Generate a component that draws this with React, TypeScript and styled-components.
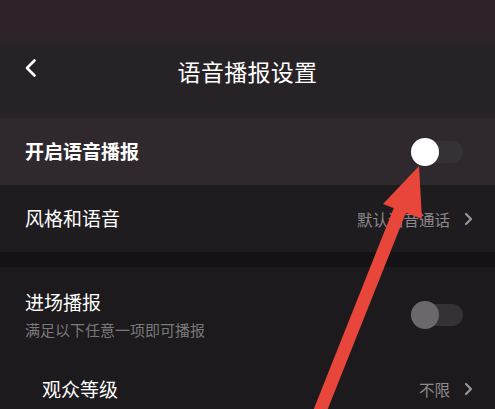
import React, { useState } from "react";
import styled, { createGlobalStyle } from "styled-components";

const GlobalStyle = createGlobalStyle`
  html, body {
    margin: 0;
    padding: 0;
    background: #1b191b;
  }
  * {
    box-sizing: border-box;
  }
  body {
    font-family: "Noto Sans CJK SC", "Noto Sans", sans-serif;
  }
`;

interface SwitchProps {
  on: boolean;
  onToggle: () => void;
}

function Switch({ on, onToggle }: SwitchProps) {
  return (
    <SwitchTrack onClick={onToggle}>
      <SwitchKnob $on={on} />
    </SwitchTrack>
  );
}

function Chevron() {
  return (
    <svg width="9" height="14" viewBox="0 0 9 14">
      <path
        d="M2 2 L7 7 L2 12"
        fill="none"
        stroke="#9a969a"
        strokeWidth="2.2"
        strokeLinecap="round"
        strokeLinejoin="round"
      />
    </svg>
  );
}

export default function App() {
  const [broadcast, setBroadcast] = useState(true);
  const [entrance, setEntrance] = useState(false);

  return (
    <Page>
      <GlobalStyle />
      <StatusArea />
      <Header>
        <BackButton>
          <svg width="14" height="20" viewBox="0 0 14 20">
            <path
              d="M10.5 2.5 L3 10 L10.5 17.5"
              fill="none"
              stroke="#ffffff"
              strokeWidth="2.6"
              strokeLinecap="round"
              strokeLinejoin="round"
            />
          </svg>
        </BackButton>
        <Title>语音播报设置</Title>
      </Header>

      <Row $bg="#2f292d">
        <RowLabel $bold>开启语音播报</RowLabel>
        <Switch on={broadcast} onToggle={() => setBroadcast(!broadcast)} />
      </Row>
      <Row $bg="#1f1c1f">
        <RowLabel>风格和语音</RowLabel>
        <RowValue>
          默认语音通话
          <Chevron />
        </RowValue>
      </Row>

      <Divider />

      <Section>
        <EntranceRow>
          <LabelStack>
            <RowLabel>进场播报</RowLabel>
            <Hint>满足以下任意一项即可播报</Hint>
          </LabelStack>
          <Switch on={entrance} onToggle={() => setEntrance(!entrance)} />
        </EntranceRow>
        <SubRow>
          <RowLabel>观众等级</RowLabel>
          <RowValue>
            不限
            <Chevron />
          </RowValue>
        </SubRow>
      </Section>

      {/* annotation arrow drawn over the screenshot */}
      <Annotation viewBox="0 0 495 409" width="495" height="409">
        <line
          x1="318"
          y1="416"
          x2="404"
          y2="200"
          stroke="#e8463a"
          strokeWidth="13"
        />
        <polygon points="419,166 383,204 422,219" fill="#e8463a" />
      </Annotation>
    </Page>
  );
}

const Page = styled.div`
  position: relative;
  width: 495px;
  height: 409px;
  overflow: hidden;
  background: #1c1a1c;
  display: flex;
  flex-direction: column;
`;

const StatusArea = styled.div`
  height: 45px;
  flex-shrink: 0;
  background: linear-gradient(180deg, #2e2329 0%, #2b2228 100%);
`;

const Header = styled.div`
  height: 73px;
  flex-shrink: 0;
  display: flex;
  align-items: center;
  justify-content: center;
  background: #272226;
  position: relative;
  padding-bottom: 22px;
`;

const BackButton = styled.div`
  position: absolute;
  left: 24px;
  top: 13px;
  display: flex;
`;

const Title = styled.div`
  color: #ffffff;
  font-size: 23px;
  letter-spacing: 0.3px;
`;

const Row = styled.div<{ $bg: string }>`
  height: 67px;
  flex-shrink: 0;
  display: flex;
  align-items: center;
  justify-content: space-between;
  padding: 0 22px 0 25px;
  background: ${(p) => p.$bg};
`;

const RowLabel = styled.div<{ $bold?: boolean }>`
  color: #ffffff;
  font-size: 19px;
  font-weight: ${(p) => (p.$bold ? 700 : 400)};
  line-height: 1.2;
`;

const RowValue = styled.div`
  display: flex;
  align-items: center;
  gap: 14px;
  color: #8d898c;
  font-size: 15.5px;
`;

const Divider = styled.div`
  height: 15px;
  flex-shrink: 0;
  background: #141214;
`;

const Section = styled.div`
  flex: 1;
  background: #1c1a1c;
  display: flex;
  flex-direction: column;
`;

const EntranceRow = styled.div`
  display: flex;
  align-items: center;
  justify-content: space-between;
  padding: 24px 22px 0 25px;
`;

const LabelStack = styled.div`
  display: flex;
  flex-direction: column;
  gap: 5px;
`;

const Hint = styled.div`
  color: #7c787b;
  font-size: 15px;
`;

const SubRow = styled.div`
  display: flex;
  align-items: center;
  justify-content: space-between;
  padding: 38px 22px 0 42px;
`;

const SwitchTrack = styled.div`
  position: relative;
  width: 52px;
  height: 22px;
  border-radius: 11px;
  background: #363135;
  cursor: pointer;
  margin-right: 10px;
`;

const SwitchKnob = styled.div<{ $on: boolean }>`
  position: absolute;
  top: -3px;
  left: 0;
  width: 28px;
  height: 28px;
  border-radius: 50%;
  background: ${(p) => (p.$on ? "#ffffff" : "#6b676a")};
`;

const Annotation = styled.svg`
  position: absolute;
  left: 0;
  top: 0;
  pointer-events: none;
`;
